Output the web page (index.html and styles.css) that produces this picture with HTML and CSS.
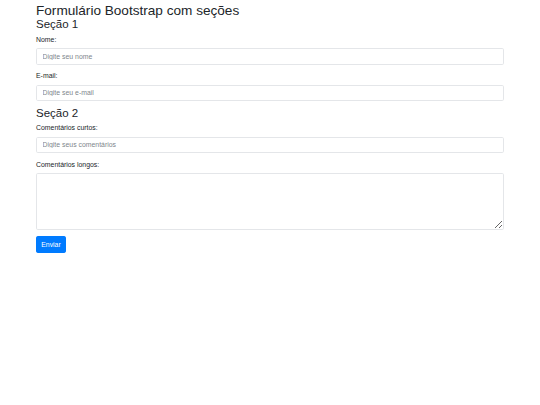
FILE: index.html
```html
<!DOCTYPE html>
<html lang="pt-BR">
<head>
<meta charset="utf-8">
<title>Formulário Bootstrap com seções</title>
<link rel="stylesheet" href="styles.css">
</head>
<body>
<div class="container">
  <h1 class="title">Formulário Bootstrap com seções</h1>
  <form class="form">
    <section class="section">
      <h3 class="section-title">Seção 1</h3>
      <div class="form-group">
        <label class="label" for="nome">Nome:</label>
        <input class="control" type="text" id="nome" placeholder="Digite seu nome">
      </div>
      <div class="form-group">
        <label class="label" for="email">E-mail:</label>
        <input class="control" type="email" id="email" placeholder="Digite seu e-mail">
      </div>
    </section>
    <section class="section">
      <h3 class="section-title">Seção 2</h3>
      <div class="form-group">
        <label class="label" for="curtos">Comentários curtos:</label>
        <input class="control" type="text" id="curtos" placeholder="Digite seus comentários">
      </div>
      <div class="form-group">
        <label class="label" for="longos">Comentários longos:</label>
        <textarea class="control area" id="longos"></textarea>
      </div>
    </section>
    <button class="btn" type="submit">Enviar</button>
  </form>
</div>
</body>
</html>
```
FILE: styles.css
```css
* { box-sizing: border-box; }
html, body { margin: 0; padding: 0; background: #fff; }
body {
  font-family: "Liberation Sans", Arial, sans-serif;
  color: #212529;
  font-size: 7px;
}
.container {
  width: 468px;
  margin-left: 36px;
}
.title {
  margin: 2px 0 0 0;
  font-size: 13.6px;
  font-weight: 400;
  line-height: 17px;
}
.section-title {
  margin: 0 0 4.6px 0;
  font-size: 11.5px;
  font-weight: 400;
  line-height: 11px;
}
.form-group {
  margin-bottom: 6.5px;
}
.label {
  display: inline-block;
  font-size: 6.9px;
  line-height: 10px;
  margin-bottom: 3.5px;
}
.control {
  display: block;
  width: 100%;
  height: 16.5px;
  padding: 0 5.5px;
  font-family: inherit;
  font-size: 6.9px;
  color: #495057;
  background: #fff;
  border: 1px solid #e4e6e9;
  border-radius: 1.7px;
  outline: none;
}
.control::placeholder { color: #80868c; opacity: 1; }
.area {
  height: 56.5px;
  padding: 3px 5.5px;
  resize: vertical;
}
.btn {
  display: inline-block;
  width: 30px;
  height: 16.5px;
  padding: 0;
  font-family: inherit;
  font-size: 6.9px;
  color: #fff;
  background: #007bff;
  border: 1px solid #007bff;
  border-radius: 1.7px;
}
```
